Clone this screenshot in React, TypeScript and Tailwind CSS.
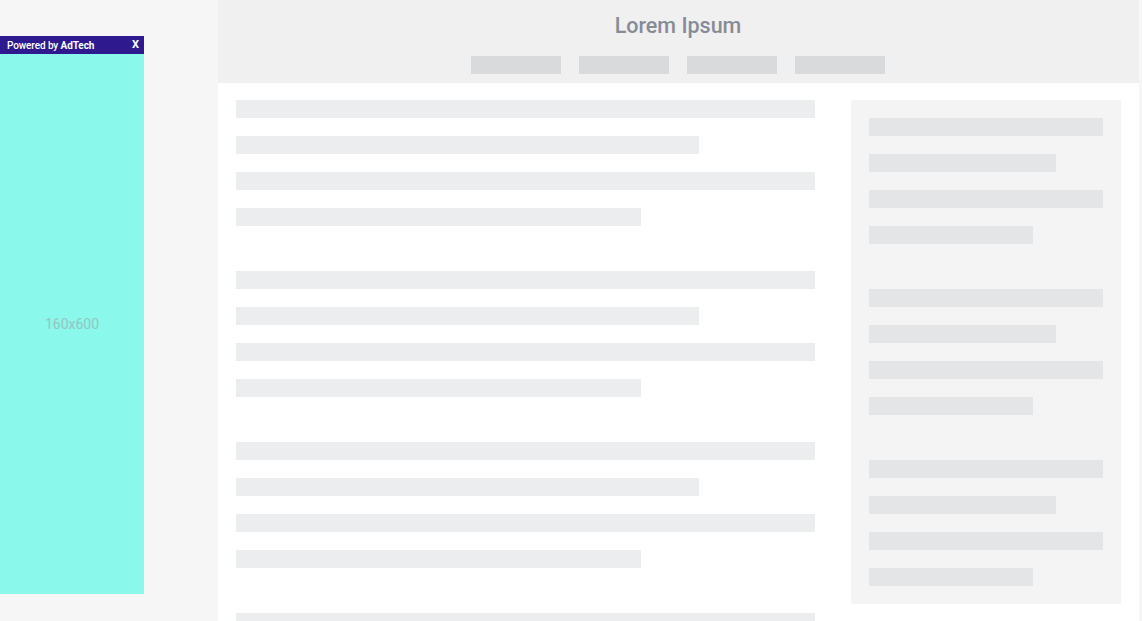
import React from "react";

const contentWidths = ["w-full", "w-[463px]", "w-full", "w-[405px]"];
const sideWidths = ["w-full", "w-[187px]", "w-full", "w-[164px]"];

function Lines({ widths, color }: { widths: string[]; color: string }) {
  return (
    <div className="flex flex-col gap-[18px]">
      {widths.map((w, i) => (
        <div key={i} className={`h-[18px] ${w} ${color}`} />
      ))}
    </div>
  );
}

export default function App() {
  return (
    <div className="relative h-[621px] w-[1142px] overflow-hidden bg-[#f5f6f5] font-['Roboto',sans-serif]">
      {/* Ad unit */}
      <div className="absolute left-0 top-[36px] flex h-[558px] w-[144px] flex-col bg-[#8af8eb]">
        <div className="flex h-[18px] items-center justify-between bg-[#2e1a8e] pl-[7px] pr-[5px] font-['Roboto',sans-serif] text-[10px] text-white">
          <span className="font-medium tracking-[-0.1px]">
            Powered by <span className="font-bold">AdTech</span>
          </span>
          <span className="text-[11px] font-bold">X</span>
        </div>
        <div className="flex flex-1 items-center justify-center text-[14px] text-[#93c6c0]">160x600</div>
      </div>

      {/* Page */}
      <div className="ml-[218px] w-[921px] bg-white">
        <header className="flex h-[83px] flex-col items-center bg-[#f0f0f0] pr-[1px] pt-[11px]">
          <h1 className="text-[21.5px] font-medium leading-[30px] text-[#868c95]">Lorem Ipsum</h1>
          <nav className="mt-[15px] flex gap-[18px]">
            {[0, 1, 2, 3].map((i) => (
              <div key={i} className="h-[18px] w-[90px] bg-[#d9dadb]" />
            ))}
          </nav>
        </header>

        <div className="flex gap-[36px] px-[18px] pt-[17px]">
          <main className="flex w-[579px] flex-col gap-[45px]">
            {[0, 1, 2, 3].map((g) => (
              <Lines key={g} widths={contentWidths} color="bg-[#ecedee]" />
            ))}
          </main>
          <aside className="flex h-[504px] w-[270px] flex-col gap-[45px] bg-[#f4f4f4] p-[18px]">
            {[0, 1, 2].map((g) => (
              <Lines key={g} widths={sideWidths} color="bg-[#e4e5e7]" />
            ))}
          </aside>
        </div>
      </div>
    </div>
  );
}
